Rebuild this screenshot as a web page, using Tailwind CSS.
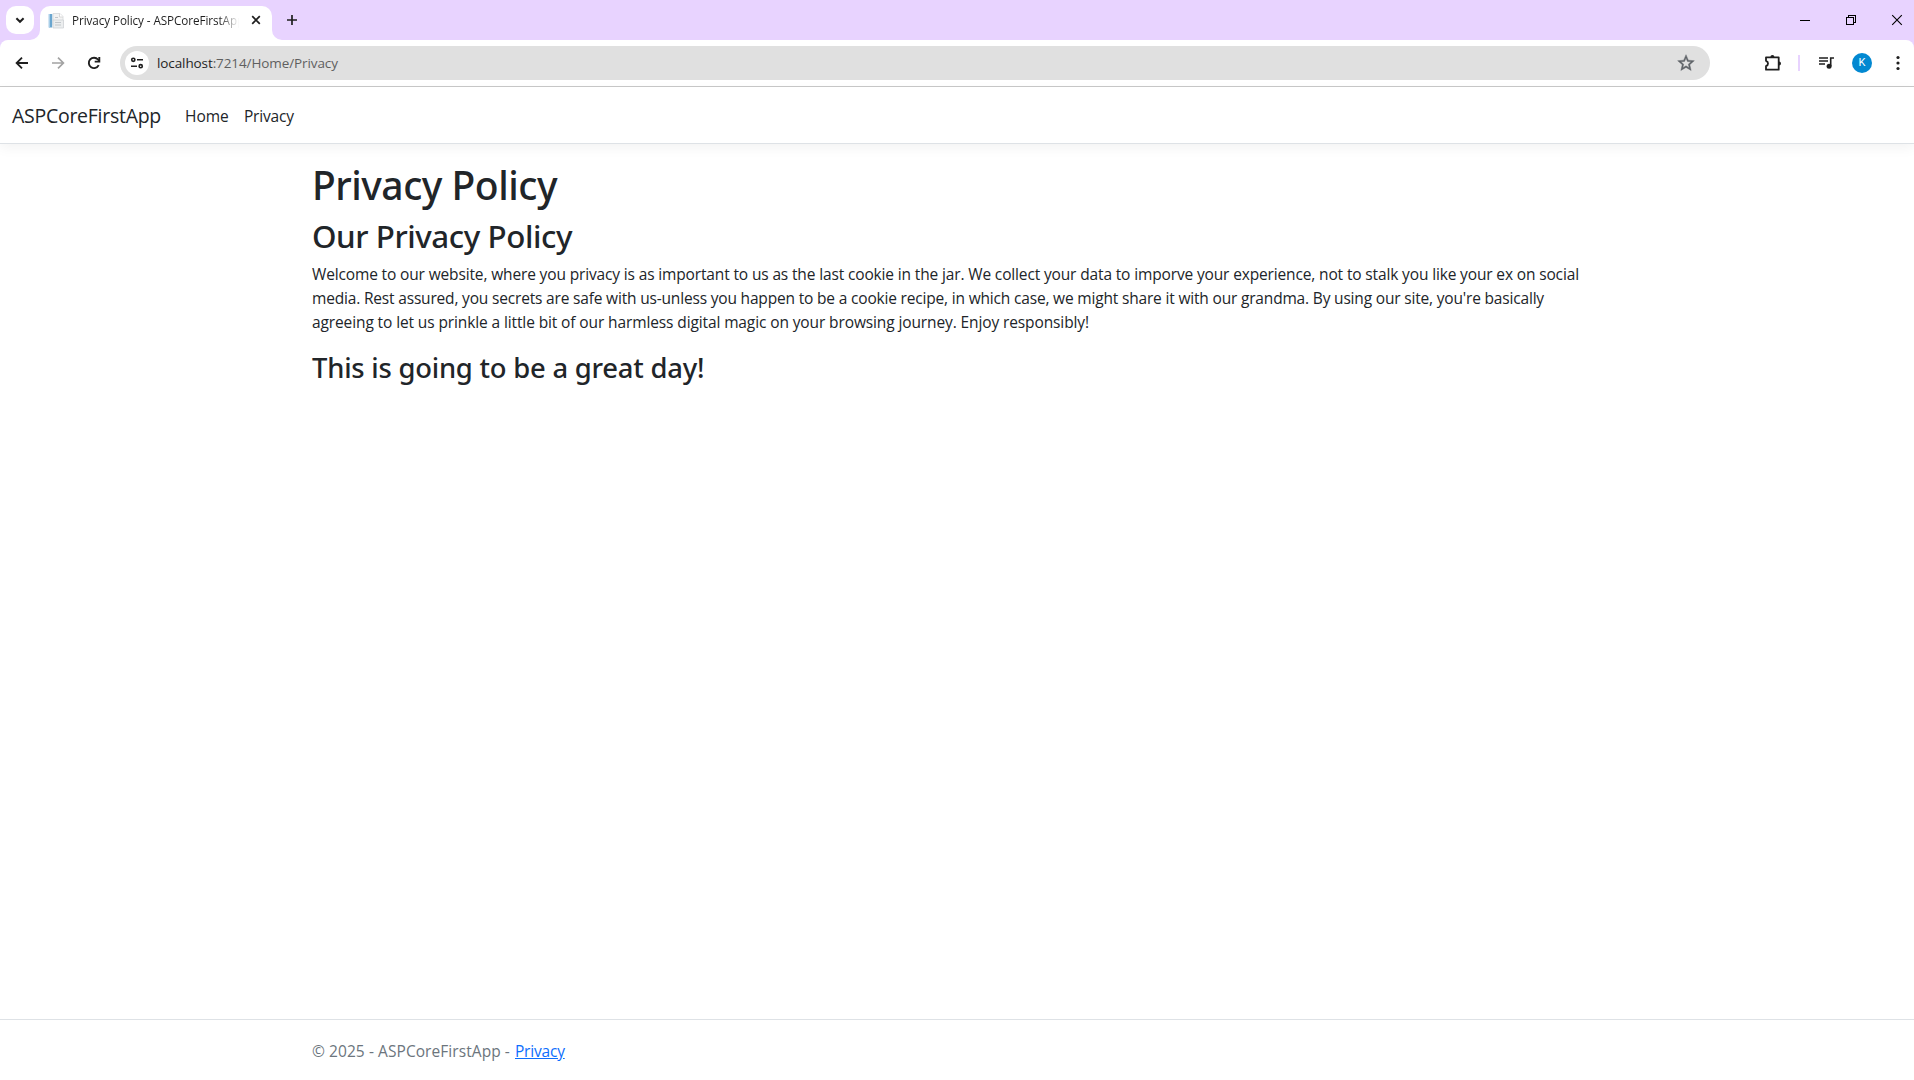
<!DOCTYPE html>
<html lang="en">
<head>
<meta charset="utf-8">
<title>Privacy Policy - ASPCoreFirstApp</title>
<script src="https://cdn.jsdelivr.net/npm/@tailwindcss/browser@4"></script>
</head>
<body class="flex h-[1080px] w-[1914px] flex-col overflow-hidden bg-white font-['Open_Sans','Noto_Sans',sans-serif] text-[#212529]">

  <!-- Tab strip -->
  <div class="flex h-10 shrink-0 bg-[#e8d3ff] pl-1.5 pt-1.5">
    <div class="flex size-7 items-center justify-center rounded-[10px] bg-white">
      <svg class="size-5" viewBox="0 0 20 20" fill="none" stroke="#1f1f1f" stroke-width="2"><path d="M6.400 8.200 10 11.800l3.600-3.600"/></svg>
    </div>
    <div class="relative ml-1.5 flex h-[34px] w-[232px] items-center rounded-t-[10px] bg-white pb-1 pl-2">
      <svg class="absolute -left-2.5 bottom-0 size-2.5" viewBox="0 0 10 10" fill="#fff"><path d="M10 0v10H0A10 10 0 0 0 10 0Z"/></svg>
      <svg class="absolute -right-2.5 bottom-0 size-2.5" viewBox="0 0 10 10" fill="#fff"><path d="M0 0v10h10A10 10 0 0 1 0 0Z"/></svg>
      <svg class="size-4" viewBox="0 0 16 16">
        <path d="M5 .5h7l3 3V12H5z" fill="#f3f3f3" stroke="#d5d8db" stroke-width=".8"/>
        <path d="M11.500.5v3.500H15" fill="#fff" stroke="#d0d0d0" stroke-width=".8"/>
        <path d="M.8 1h3.400v13.500H.8z" fill="#6aa6cf"/><path d="M.8 1h1.200v13.500H.8z" fill="#a9cfe8"/>
        <path d="M5 7h10.500v8H5z" fill="#eceeef" stroke="#cfd2d5" stroke-width=".8"/>
        <path d="M7 9.500h6M7 12h6M7 4.500h3" stroke="#bcc1c5" stroke-width=".9"/>
      </svg>
      <div class="ml-2 w-[167px] overflow-hidden whitespace-nowrap bg-linear-to-r from-[#1f1f1f] from-88% to-transparent bg-clip-text text-[11.7px] tracking-[-0.08px] text-transparent">Privacy Policy - ASPCoreFirstApp</div>
      <svg class="absolute left-[210px] top-[8px] size-3" viewBox="0 0 12 12" stroke="#1f1f1f" stroke-width="1.700"><path d="m2.200 2.200 7.600 7.600M9.800 2.200 2.200 9.800"/></svg>
    </div>
    <svg class="ml-2.5 mt-1 size-5" viewBox="0 0 20 20" stroke="#1f1f1f" stroke-width="1.700"><path d="M10 5v10M5 10h10"/></svg>
    <div class="-mr-1.5 ml-auto flex h-7 items-center">
      <svg class="h-7 w-[46px]" viewBox="0 0 46 28" stroke="#000" shape-rendering="crispEdges"><path d="M18 14.500h10"/></svg>
      <svg class="h-7 w-[46px]" viewBox="0 0 46 28" fill="none" stroke="#000" shape-rendering="crispEdges"><path d="M18.500 11.500h7v7h-7zM20.500 11v-1.500h7v7H26"/></svg>
      <svg class="h-7 w-[46px]" viewBox="0 0 46 28" stroke="#000" stroke-width="1.100"><path d="m18.200 9.200 9.600 9.600M27.800 9.200l-9.600 9.600"/></svg>
    </div>
  </div>

  <!-- Toolbar -->
  <div class="h-[47px] shrink-0 bg-[#e8d3ff]">
    <div class="flex h-[47px] items-center rounded-t-[8px] border-b border-[#c9c9c9] bg-white pl-3">
      <svg class="size-5" viewBox="0 0 20 20" fill="none" stroke="#1f1f1f" stroke-width="1.800"><path d="M16 10H5M10 4.600 4.600 10l5.400 5.400"/></svg>
      <svg class="ml-4 size-5" viewBox="0 0 20 20" fill="none" stroke="#a3a3a3" stroke-width="1.700"><path d="M4 10h11M10 4.600l5.400 5.400-5.400 5.400"/></svg>
      <svg class="ml-4 size-5" viewBox="0 0 20 20" fill="none" stroke="#1f1f1f" stroke-width="1.900"><path d="M14.700 12.200A5.200 5.200 0 1 1 14 6.500l1.200 1.500"/><path d="M15.300 4v4.600h-4.600"/></svg>
      <div class="ml-4 flex h-[34px] w-[1590px] items-center rounded-full bg-[#e0e0e0] pl-[5px] pr-3.5">
        <div class="flex size-6 items-center justify-center rounded-full bg-white">
          <svg class="size-4" viewBox="0 0 16 16" fill="none" stroke="#1f1f1f" stroke-width="1.600"><circle cx="4.300" cy="4.800" r="1.600"/><path d="M8 4.800h6M2 11.200h6"/><circle cx="11.700" cy="11.200" r="1.600"/></svg>
        </div>
        <div class="ml-2 whitespace-nowrap text-[13.5px] tracking-[-0.1px] text-[#5f5f5f]"><span class="text-[#1f1f1f]">localhost</span>:7214/Home/Privacy</div>
        <svg class="ml-auto size-5" viewBox="0 0 24 24" fill="#5f6368" stroke="#5f6368" stroke-width=".5"><path d="m22 9.240-7.190-.62L12 2 9.190 8.630 2 9.240l5.460 4.730L5.820 21 12 17.270 18.180 21l-1.630-7.030L22 9.240zM12 15.400l-3.760 2.270 1-4.280-3.320-2.880 4.380-.38L12 6.100l1.710 4.040 4.380.38-3.320 2.880 1 4.280L12 15.400z"/></svg>
      </div>
      <svg class="ml-[53px] size-5" viewBox="0 0 20 20" fill="none" stroke="#1f1f1f" stroke-width="1.800"><path d="M3 4.300h12.700v12.400H3v-3.500c2.700-1 2.700-4.400 0-5.400z" stroke-linejoin="round"/><path d="M7.400 4a2 2 0 0 1 4 0zM16 8.500a2 2 0 0 1 0 4z" fill="#1f1f1f" stroke="none"/></svg>
      <div class="ml-[15px] h-4 w-0.5 bg-[#e8d3ff]"></div>
      <svg class="ml-[17px] size-5" viewBox="0 0 20 20" fill="none" stroke="#1f1f1f" stroke-width="1.600"><path d="M2 5h9M2 8h9M2 11h6M17 5h-3.300v8"/><circle cx="12.100" cy="13.200" r="2.500" fill="#1f1f1f" stroke="none"/></svg>
      <div class="ml-[15px] flex size-5 items-center justify-center rounded-full bg-[#0288d1] font-[Roboto,sans-serif] text-[11px] text-white">K</div>
      <svg class="ml-4 size-5" viewBox="0 0 20 20" fill="#1f1f1f"><circle cx="10" cy="4.500" r="1.600"/><circle cx="10" cy="10" r="1.600"/><circle cx="10" cy="15.500" r="1.600"/></svg>
    </div>
  </div>

  <!-- Site navigation -->
  <header class="flex h-[57px] shrink-0 items-center border-b border-[#dee2e6] pl-3 pt-px shadow-[0_4px_12px_rgba(0,0,0,0.05)]">
    <a class="w-[149px] whitespace-nowrap text-[19.5px] leading-[30px] tracking-[-0.27px]">ASPCoreFirstApp</a>
    <nav class="ml-6 flex gap-4 text-[15.5px] leading-6"><a class="w-[43px]">Home</a><a class="tracking-[-0.2px]">Privacy</a></nav>
  </header>

  <!-- Page content -->
  <main class="ml-[312px] flex-1 whitespace-nowrap pt-[17px]">
    <div class="font-['Noto_Sans',sans-serif] font-medium">
      <h1 class="mb-2 text-[39px] leading-[48px] tracking-[-0.5px]">Privacy Policy</h1>
      <h2 class="mb-[7px] text-[31.3px] leading-[38px] tracking-[-0.43px]">Our Privacy Policy</h2>
    </div>
    <p class="mb-[17px] flex flex-col items-start text-[15.5px] leading-6">
      <span class="tracking-[-0.143px]">Welcome to our website, where you privacy is as important to us as the last cookie in the jar. We collect your data to imporve your experience, not to stalk you like your ex on social</span>
      <span class="tracking-[-0.178px]">media. Rest assured, you secrets are safe with us-unless you happen to be a cookie recipe, in which case, we might share it with our grandma. By using our site, you're basically</span>
      <span class="tracking-[-0.115px]">agreeing to let us prinkle a little bit of our harmless digital magic on your browsing journey. Enjoy responsibly!</span>
    </p>
    <h3 class="font-['Noto_Sans',sans-serif] text-[27.4px] font-medium leading-[34px] tracking-[-0.22px]">This is going to be a great day!</h3>
  </main>

  <footer class="flex h-[61px] shrink-0 whitespace-nowrap border-t border-[#dee2e6] pl-[312px] text-[15.5px] leading-[62px] text-[#6c757d]">
    <span class="w-[203px] tracking-[0.07px]">© 2025 - ASPCoreFirstApp -</span><a class="tracking-[-0.2px] text-[#0d6efd] underline">Privacy</a>
  </footer>
</body>
</html>
